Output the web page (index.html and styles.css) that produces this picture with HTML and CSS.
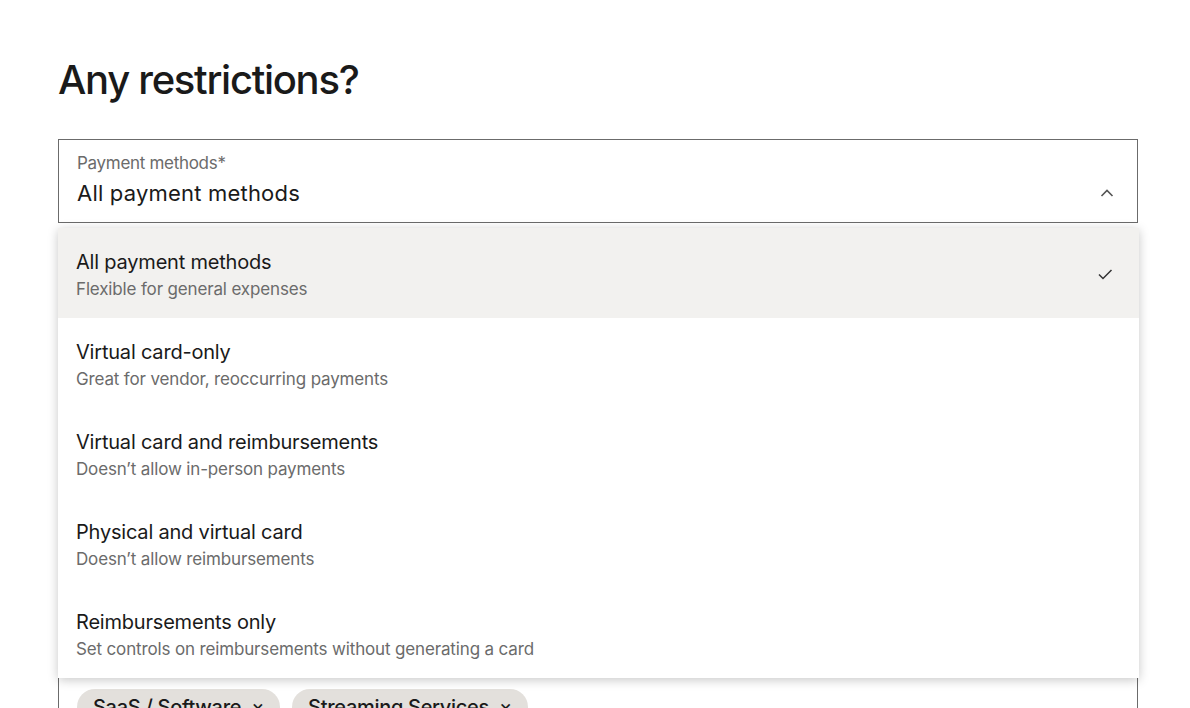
FILE: index.html
```html
<!DOCTYPE html>
<html lang="en">
<head>
    <meta charset="UTF-8">
    <meta name="viewport" content="width=device-width, initial-scale=1.0">
    <title>Any restrictions?</title>
    <link rel="stylesheet" href="styles.css">
</head>
<body>
    <div id="container">
        <h1>Any restrictions?</h1>

        <div class="select-wrap">
            <div class="select open">
                <div class="select-text">
                    <label class="select-label">Payment methods*</label>
                    <div class="select-value">All payment methods</div>
                </div>
                <svg class="chevron" width="14" height="10" viewBox="0 0 14 10">
                    <path d="M1.5 8 L7 2.5 L12.5 8" fill="none" stroke="#555" stroke-width="1.6"/>
                </svg>
            </div>

            <ul class="menu">
                <li class="option selected">
                    <div>
                        <div class="option-title">All payment methods</div>
                        <div class="option-desc">Flexible for general expenses</div>
                    </div>
                    <svg class="check" width="16" height="14" viewBox="0 0 16 14">
                        <path d="M2 7.5 L6 11.5 L14.5 3" fill="none" stroke="#333" stroke-width="1.5"/>
                    </svg>
                </li>
                <li class="option">
                    <div>
                        <div class="option-title">Virtual card-only</div>
                        <div class="option-desc">Great for vendor, reoccurring payments</div>
                    </div>
                </li>
                <li class="option">
                    <div>
                        <div class="option-title">Virtual card and reimbursements</div>
                        <div class="option-desc">Doesn’t allow in-person payments</div>
                    </div>
                </li>
                <li class="option">
                    <div>
                        <div class="option-title">Physical and virtual card</div>
                        <div class="option-desc">Doesn’t allow reimbursements</div>
                    </div>
                </li>
                <li class="option">
                    <div>
                        <div class="option-title">Reimbursements only</div>
                        <div class="option-desc">Set controls on reimbursements without generating a card</div>
                    </div>
                </li>
            </ul>
        </div>

        <div class="categories">
            <label class="select-label">Merchant categories</label>
            <div class="chips">
                <span class="chip">SaaS / Software <span class="chip-x">×</span></span>
                <span class="chip">Streaming Services <span class="chip-x">×</span></span>
            </div>
        </div>
    </div>
</body>
</html>
```

FILE: styles.css
```css
body {
    font-family: Inter, "Noto Sans", sans-serif;
    background: #fff;
    color: #1a1a1a;
    margin: 0;
    padding: 0;
    height: 100vh;
    overflow: hidden;
}

#container {
    width: 1080px;
    margin-left: 58px;
}

h1 {
    font-size: 40px;
    font-weight: 500;
    letter-spacing: -1.3px;
    line-height: 48px;
    margin: 56px 0 35px;
}

.select-wrap {
    position: relative;
}

.select {
    height: 82px;
    border: 1px solid #6b6b6b;
    display: flex;
    align-items: flex-start;
    justify-content: space-between;
    padding: 0 23px 0 18px;
}

.select-text {
    padding-top: 12px;
}

.select-label {
    display: block;
    font-size: 17px;
    color: #6b6b6b;
    line-height: 22px;
    letter-spacing: -0.3px;
}

.select-value {
    font-size: 22px;
    line-height: 30px;
    margin-top: 4px;
    letter-spacing: 0.2px;
}

.chevron {
    margin-top: 48px;
}

.menu {
    position: absolute;
    top: 89px;
    left: 0;
    right: -1px;
    list-style: none;
    margin: 0;
    padding: 0;
    background: #fff;
    box-shadow: 0 2px 10px rgba(0, 0, 0, 0.22);
    z-index: 2;
}

.option {
    box-sizing: border-box;
    height: 90px;
    padding: 6px 26px 0 18px;
    display: flex;
    align-items: center;
    justify-content: space-between;
}

.option.selected {
    background: #f2f1ef;
}

.option-title {
    font-size: 20px;
    line-height: 27px;
    letter-spacing: -0.2px;
}

.option-desc {
    font-size: 17px;
    line-height: 27px;
    color: #6b6b6b;
    letter-spacing: -0.15px;
}

.check {
    margin-top: -4px;
}

.categories {
    margin-top: 24px;
    height: 480px;
    border: 1px solid #6b6b6b;
    padding: 18px 18px;
}

.chips {
    margin-top: 401px;
    display: flex;
    gap: 12px;
}

.chip {
    background: #e3e0dc;
    border-radius: 18px;
    padding: 5px 16px;
    font-size: 20px;
    font-weight: 500;
    line-height: 26px;
    letter-spacing: -0.3px;
    display: flex;
    align-items: center;
    gap: 10px;
}

.chip-x {
    font-weight: 400;
    font-size: 20px;
}
```
